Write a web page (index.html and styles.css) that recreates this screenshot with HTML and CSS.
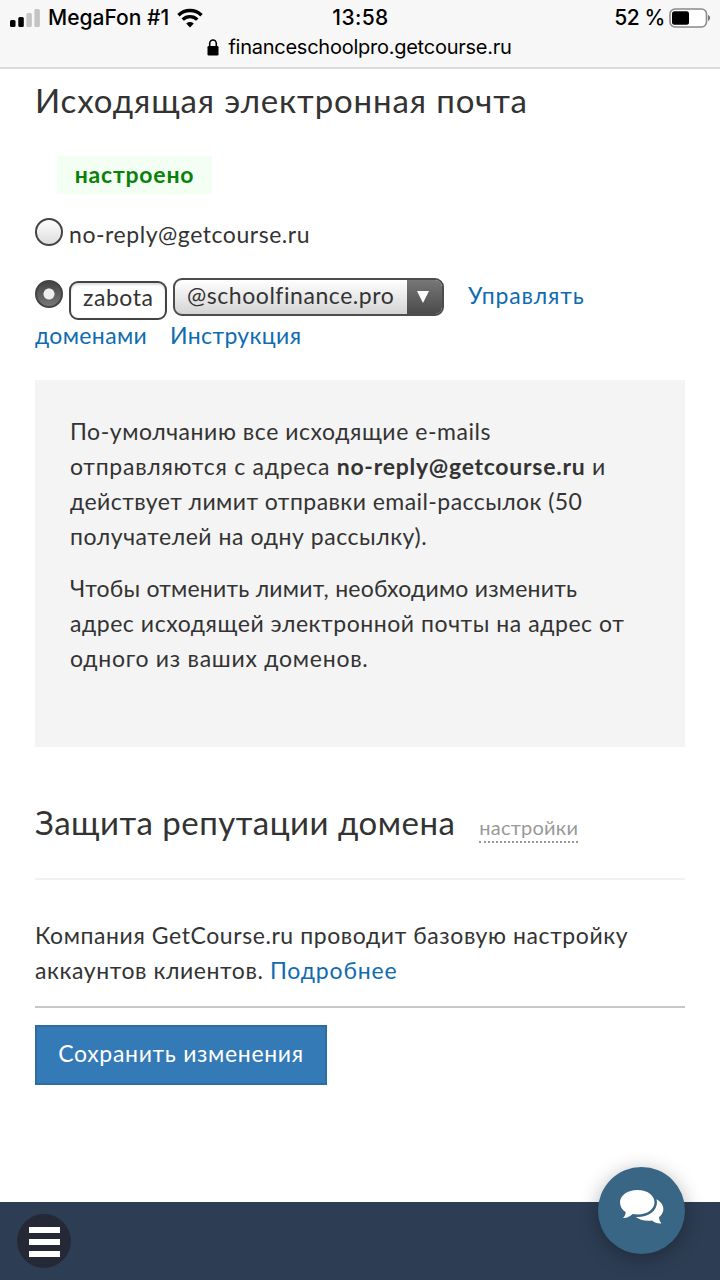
FILE: index.html
```html
<!DOCTYPE html>
<html lang="ru">
<head>
    <title>Исходящая электронная почта</title>
    <meta charset="utf-8">
    <meta name="viewport" content="width=device-width, initial-scale=1">
    <link rel="stylesheet" href="styles.css">
</head>
<body>
    <header class="browser-bar">
        <div class="status">
            <div class="status-left">
                <svg class="signal" width="30" height="20" viewBox="0 0 30 20">
                    <rect x="0" y="12" width="5.5" height="7" rx="1.5" fill="#000"/>
                    <rect x="8.3" y="9" width="5.5" height="10" rx="1.5" fill="#000"/>
                    <rect x="16.4" y="5" width="5.5" height="14" rx="1.5" fill="#c4c4c4"/>
                    <rect x="24.4" y="1" width="5.5" height="18" rx="1.5" fill="#c4c4c4"/>
                </svg>
                <span class="carrier">MegaFon #1</span>
                <svg class="wifi" width="26" height="20" viewBox="0 0 26 20">
                    <path d="M1.5 7.2a16.4 16.4 0 0 1 23 0M5.7 11.6a10.4 10.4 0 0 1 14.6 0" fill="none" stroke="#000" stroke-width="3.4"/>
                    <path d="M9.2 15.4a6.2 6.2 0 0 1 7.6 0L13 19.5z" fill="#000"/>
                </svg>
            </div>
            <span class="time">13:58</span>
            <div class="status-right">
                <span class="percent">52 %</span>
                <svg class="battery" width="42" height="20" viewBox="0 0 42 20">
                    <rect x="1" y="1" width="36.5" height="18" rx="5" fill="#fff" stroke="#8b8b8b" stroke-width="1.6"/>
                    <rect x="3" y="3.3" width="17" height="13.4" rx="2.5" fill="#000"/>
                    <path d="M39 6.8q4.4 3.2 0 6.4z" fill="#777"/>
                </svg>
            </div>
        </div>
        <div class="address">
            <svg width="12" height="17" viewBox="0 0 12 17">
                <rect x="0.5" y="7" width="11" height="9.5" rx="1.3" fill="#000"/>
                <path d="M2.7 8V4.6a3.3 3.6 0 0 1 6.6 0V8" fill="none" stroke="#000" stroke-width="1.6"/>
            </svg>
            <span>financeschoolpro.getcourse.ru</span>
        </div>
    </header>

    <main>
        <h1>Исходящая электронная почта</h1>
        <div class="state">настроено</div>

        <label class="sender">
            <span class="radio"></span>
            <span class="sender-email">no-reply@getcourse.ru</span>
        </label>

        <div class="sender-custom">
            <span class="radio checked"></span>
            <span class="input">zabota</span>
            <span class="select">
                <span class="select-value">@schoolfinance.pro</span>
                <span class="select-arrow"><svg width="12" height="12" viewBox="0 0 12 12"><path d="M0 0h12L6 12z" fill="#fff"/></svg></span>
            </span>
            <a href="#" class="link-manage">Управлять</a>
        </div>
        <div class="links">
            <a href="#">доменами</a>
            <a href="#">Инструкция</a>
        </div>

        <div class="info">
            <p>
                По-умолчанию все исходящие e-mails<br>
                <span class="wide">отправляются с адреса <strong>no-reply@getcourse.ru</strong> и</span><br>
                <span class="narrow">действует лимит отправки email-рассылок (50</span><br>
                получателей на одну рассылку).
            </p>
            <p>
                <span class="narrower">Чтобы отменить лимит, необходимо изменить</span><br>
                адрес исходящей электронной почты на адрес от<br>
                <span class="wide">одного из ваших доменов.</span>
            </p>
        </div>

        <div class="reputation">
            <h2>Защита репутации домена</h2>
            <a href="#" class="settings">настройки</a>
        </div>

        <p class="company">
            Компания GetCourse.ru проводит базовую настройку<br>
            аккаунтов клиентов. <a href="#">Подробнее</a>
        </p>

        <button class="save" type="button">Сохранить изменения</button>
    </main>

    <footer>
        <div class="menu"><i></i><i></i><i></i></div>
        <div class="chat">
            <svg width="44" height="35" viewBox="0 0 44 35">
                <path d="M36 9C41 11.5 43.8 15.5 43.3 20c-.3 3-2 5.3-4.3 7.2.1 2.300 1 4.300 2.300 6.300-3.800.3-7-1.200-9.200-3-6 1-13-.5-17-4z" fill="#fff"/>
                <path d="M17.500 0C27.500 0 34.500 5.500 34.500 12.300S27.500 24.500 17.500 24.500c-1.700 0-3.300-.2-4.800-.5C10 26.300 7 28.300 3 28c1.700-1.600 2.600-3.400 2.700-5.700C2.200 20 0 16.500 0 12.300 0 5.500 7.500 0 17.500 0z" fill="#fff" stroke="#3a6686" stroke-width="5" paint-order="stroke"/>
            </svg>
        </div>
    </footer>
</body>
</html>
```

FILE: styles.css
```css
:root {
    --text-color: #333;
    --link-color: #0f6cb0;
    --bar-color: #2d3d53;
}

* {
    margin: 0;
    padding: 0;
    box-sizing: border-box;
}

body {
    height: 1280px;
    display: flex;
    flex-direction: column;
    overflow: hidden;
    font-family: Lato, "Open Sans", sans-serif;
    font-size: 23px;
    line-height: 35px;
    letter-spacing: 0.55px;
    color: var(--text-color);
    background-color: #fff;
    white-space: nowrap;
}

a {
    color: var(--link-color);
    text-decoration: none;
}

svg {
    display: block;
    flex: none;
}

.browser-bar {
    height: 69px;
    background-color: #f7f7f7;
    border-bottom: 2px solid #dcdcdc;
    font-family: Inter, sans-serif;
    letter-spacing: 0;
    color: #000;
}

.status {
    height: 34px;
    display: grid;
    grid-template-columns: 1fr auto 1fr;
    align-items: center;
    padding: 0 9px 0 10px;
    font-size: 21px;
    font-weight: 450;
}

.status-left,
.status-right {
    display: flex;
    align-items: center;
}

.status-left {
    gap: 8px;
}

.status-right {
    justify-content: flex-end;
    gap: 4px;
}

.time {
    font-weight: 500;
    letter-spacing: 0.4px;
}

.percent {
    letter-spacing: -0.4px;
}

.address {
    display: flex;
    align-items: center;
    justify-content: center;
    gap: 9px;
    height: 26px;
    padding-right: 1px;
    font-size: 20px;
    letter-spacing: -0.25px;
}

main {
    flex: 1;
    padding: 0 35px;
}

h1,
h2 {
    font-size: 33px;
    font-weight: 400;
    line-height: 40px;
}

h1 {
    margin-top: 11px;
    letter-spacing: 0.88px;
}

h2 {
    letter-spacing: 0.48px;
}

.state {
    width: 155px;
    height: 38px;
    margin: 36px 0 0 22px;
    background-color: #f2fff2;
    color: #0a800a;
    font-weight: 700;
    line-height: 36px;
    letter-spacing: 0.8px;
    text-align: center;
}

.sender {
    display: flex;
    align-items: center;
    gap: 6px;
    height: 36px;
    margin-top: 22px;
}

.radio {
    flex: none;
    width: 28px;
    height: 28px;
    border: 2px solid #444;
    border-radius: 50%;
    background: linear-gradient(#fff, #ddd);
    margin-bottom: 5px;
}

.radio.checked {
    background: radial-gradient(circle, #eee 5px, transparent 6px), linear-gradient(#444, #777);
    margin-bottom: 7px;
}

.sender-custom {
    display: flex;
    align-items: center;
    height: 42px;
    margin-top: 24px;
}

.input {
    width: 98px;
    height: 39px;
    margin: 6px 6px 0;
    padding-left: 12px;
    border: 2px solid #444;
    border-radius: 9px;
    line-height: 28px;
    box-shadow: inset 0 2px 2px #ddd;
}

.select {
    display: flex;
    width: 271px;
    height: 38px;
    margin-bottom: 1px;
    border: 2px solid #4c4c4c;
    border-radius: 9px;
    background: linear-gradient(#fff, #d4d4d4);
    overflow: hidden;
}

.select-value {
    flex: 1;
    padding-left: 12px;
    line-height: 31px;
}

.select-arrow {
    display: flex;
    width: 35px;
    align-items: center;
    justify-content: center;
    padding-right: 3px;
    background: linear-gradient(#777, #4a4a4a);
}

.link-manage {
    margin: 0 0 3px 24px;
    letter-spacing: 0.85px;
}

.links {
    display: flex;
    gap: 23px;
    letter-spacing: 0.35px;
}

.info {
    height: 367px;
    margin-top: 27px;
    padding: 34px 35px;
    background-color: #f4f4f4;
}

.info p + p {
    margin-top: 17px;
}

.wide {
    letter-spacing: 0.74px;
}

.narrow {
    letter-spacing: 0.44px;
}

.narrower {
    letter-spacing: 0.22px;
}

.reputation {
    display: flex;
    align-items: baseline;
    gap: 24px;
    height: 84px;
    margin-top: 49px;
    padding-top: 6px;
    border-bottom: 2px solid #f2f2f2;
}

.settings {
    border-bottom: 2px dotted #999;
    color: #999;
    font-size: 20px;
    line-height: 28px;
    letter-spacing: 0.22px;
}

.company {
    margin-top: 38px;
    padding-bottom: 18px;
    border-bottom: 2px solid #c8c8c8;
    letter-spacing: 0.58px;
}

.company a {
    letter-spacing: 0.85px;
}

.save {
    width: 292px;
    height: 60px;
    margin-top: 17px;
    padding-bottom: 3px;
    border: 2px solid #2e6da4;
    background-color: #337ab7;
    color: #fff;
    font: inherit;
    letter-spacing: 0.68px;
}

footer {
    position: relative;
    height: 78px;
    padding: 12px 17px;
    background-color: var(--bar-color);
}

.menu {
    display: flex;
    flex-direction: column;
    align-items: center;
    justify-content: center;
    gap: 6px;
    width: 54px;
    height: 54px;
    padding-top: 1px;
    border-radius: 50%;
    background-color: #252936;
}

.menu i {
    width: 31px;
    height: 6px;
    background-color: #fff;
}

/* floats over the edge of the bottom bar */
.chat {
    position: absolute;
    right: 35px;
    top: -35px;
    display: flex;
    align-items: center;
    justify-content: center;
    width: 87px;
    height: 87px;
    padding: 0 0 6px 1px;
    border-radius: 50%;
    background-color: #3a6686;
    box-shadow: 0 4px 20px rgba(0, 0, 0, 0.3);
}
```
